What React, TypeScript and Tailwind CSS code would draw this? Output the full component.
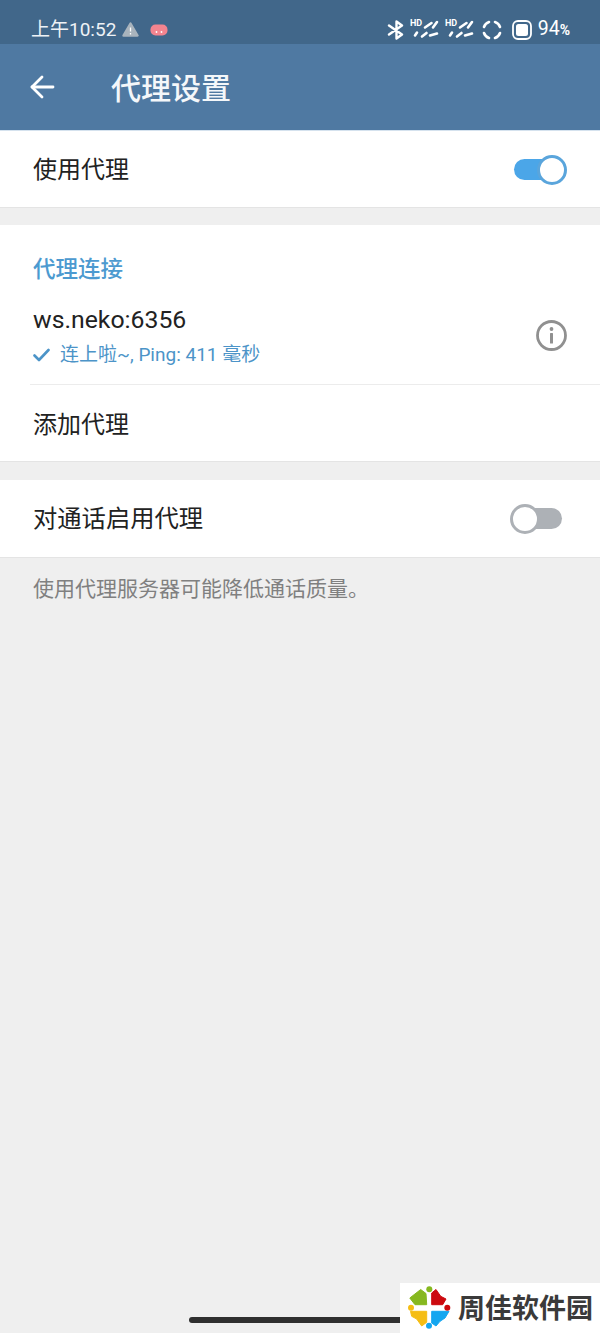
import React from "react";

const font = { fontFamily: '"Roboto","Noto Sans CJK SC",sans-serif' };

function Signal() {
  return (
    <svg width="29" height="22" viewBox="0 0 29 22" fill="none">
      <text x="0" y="7" fontSize="9" fontWeight="700" fill="#fff" fontFamily="Roboto, sans-serif">HD</text>
      <g stroke="#fff" strokeWidth="2.6" strokeLinecap="round">
        <path d="M5 16.5 L7 13.5" />
        <path d="M12 17.5 L16.5 14" />
        <path d="M15 8.5 L21.5 4" />
        <path d="M20 16.5 L27 14.5" />
        <path d="M23 8.5 L27 3" />
      </g>
    </svg>
  );
}

function StatusBar() {
  return (
    <div className="h-[44px] bg-[#41678a] flex items-center justify-between pl-[31px] pr-[30px] pt-[15px] text-white">
      <div className="flex items-center">
        <span className="text-[19px] leading-[24px] text-[#eef2f6]">上午10:52</span>
        <svg className="ml-[6px]" width="17" height="15" viewBox="0 0 17 15">
          <path d="M8.5 1.5 L15.5 13.5 H1.5 Z" fill="#a9b4bd" stroke="#a9b4bd" strokeWidth="2.4" strokeLinejoin="round" />
          <path d="M8.5 5.5 V9.5 M8.5 11 V12.5" stroke="#fff" strokeWidth="1.3" />
        </svg>
        <svg className="ml-[11px]" width="18" height="14" viewBox="0 0 18 14">
          <rect x="0.5" y="1.5" width="17" height="11" rx="5" fill="#f3848f" />
          <circle cx="6.5" cy="9" r="0.9" fill="#fff" />
          <circle cx="11.5" cy="9" r="0.9" fill="#fff" />
        </svg>
      </div>
      <div className="flex items-center">
        <svg width="18" height="20" viewBox="0 0 18 20" fill="none" stroke="#fff" strokeWidth="2.4" strokeLinecap="round" strokeLinejoin="round">
          <path d="M2 5.5 L15 14.5 L9.5 18.5 V1.5 L15 5.5 L2 14.5" />
        </svg>
        <div className="ml-[5px]"><Signal /></div>
        <div className="ml-[6px]"><Signal /></div>
        <svg className="ml-[8px]" width="20" height="20" viewBox="0 0 20 20" fill="none" stroke="#fff" strokeWidth="2.6" strokeLinecap="round">
          <path d="M2 7 A8 8 0 0 1 7 2" />
          <path d="M13 2 A8 8 0 0 1 18 7" />
          <path d="M18 13 A8 8 0 0 1 13 18" />
          <path d="M7 18 A8 8 0 0 1 2 13" />
        </svg>
        <svg className="ml-[10px]" width="20" height="20" viewBox="0 0 20 20" fill="none">
          <rect x="1" y="1" width="18" height="18" rx="5" stroke="#fff" strokeWidth="1.8" />
          <rect x="4" y="4" width="12" height="12" rx="2.5" fill="#fff" />
        </svg>
        <span className="ml-[6px] text-[19.5px] leading-[24px] whitespace-nowrap">94<span className="text-[14px] font-bold">%</span></span>
      </div>
    </div>
  );
}

function Switch({ on }: { on: boolean }) {
  return (
    <div className="relative w-[53px] h-[30px] flex items-center">
      <div className={on ? "w-[50px] h-[21px] rounded-full bg-[#4ba6e8]" : "w-[50px] h-[21px] ml-[2px] rounded-full bg-[#adb1b6]"} />
      <div className={on ? "absolute right-0 top-0 w-[30px] h-[30px] rounded-full bg-white border-[3px] border-[#5aa5dc]" : "absolute left-0 top-0 w-[30px] h-[30px] rounded-full bg-white border-[3px] border-[#adb1b6]"} />
    </div>
  );
}

export default function App() {
  return (
    <div className="relative w-[600px] h-[1333px] overflow-hidden bg-[#efefef]" style={font}>
      <StatusBar />
      <header className="h-[86px] bg-[#4f79a2] flex items-center pl-[30px] text-white">
        <svg width="25" height="26" viewBox="0 0 25 26" fill="none" stroke="#fff" strokeWidth="2.8" strokeLinecap="round" strokeLinejoin="round">
          <path d="M2 13 H23" />
          <path d="M12 3 L2 13 L12 23" />
        </svg>
        <h1 className="ml-[56px] mt-[3px] text-[30px] leading-[36px] font-medium text-[#f4f7fa]">代理设置</h1>
      </header>

      <section className="h-[78px] pt-[1px] bg-white border-t border-[#d5e2ee] border-b-[#e4e4e4] border-b flex items-center justify-between pl-[33px] pr-[33px]">
        <span className="text-[24px] leading-[32px] text-[#222222]">使用代理</span>
        <Switch on />
      </section>

      <section className="mt-[17px] h-[237px] bg-white border-b border-[#e4e4e4]">
        <div className="pt-[30px] pl-[33px] text-[22.5px] leading-[28px] font-medium text-[#4c9ad0]">代理连接</div>
        <div className="mt-[12px] h-[90px] ml-[30px] pl-[3px] pr-[33px] border-b border-[#ececec] flex items-center justify-between">
          <div className="mt-[-6px]">
            <div className="text-[24.8px] leading-[32px] text-[#222222] mt-[-1px]">ws.neko:6356</div>
            <div className="mt-[6px] flex items-center text-[19px] leading-[26px] text-[#4c94c8]">
              <svg width="17" height="14" viewBox="0 0 17 14" fill="none" stroke="#4c94c8" strokeWidth="2.6" strokeLinecap="round" strokeLinejoin="round">
                <path d="M1.5 7.5 L6 12 L15.5 2" />
              </svg>
              <span className="ml-[10px]">连上啦~, Ping: 411 毫秒</span>
            </div>
          </div>
          <svg width="31" height="31" viewBox="0 0 31 31" fill="none" className="shrink-0 mt-[-8px]">
            <circle cx="15.5" cy="15.5" r="14" stroke="#909090" strokeWidth="2.8" />
            <circle cx="15.5" cy="9" r="1.9" fill="#909090" />
            <rect x="14" y="13" width="3" height="10.5" rx="0.5" fill="#909090" />
          </svg>
        </div>
        <div className="h-[76px] pt-[3px] flex items-center pl-[33px] text-[24px] leading-[32px] text-[#222222]">添加代理</div>
      </section>

      <section className="mt-[18px] h-[78px] bg-white border-b border-[#e4e4e4] flex items-center justify-between pl-[33px] pr-[37px]">
        <span className="text-[24.3px] leading-[32px] text-[#222222]">对通话启用代理</span>
        <Switch on={false} />
      </section>

      <p className="pt-[17px] pl-[33px] text-[21px] leading-[28px] text-[#808080]">使用代理服务器可能降低通话质量。</p>

      <div className="absolute left-[189px] top-[1317px] w-[230px] h-[6px] rounded-full bg-[#2f2f2f]" />

      <div className="absolute left-[400px] top-[1283px] w-[200px] h-[50px] bg-white flex items-center pl-[7px]">
        <svg width="46" height="46" viewBox="0 0 46 46" strokeLinejoin="round" strokeWidth="1">
          <path d="M2.8 13 L13.7 4.5 L19 8.5 L19.7 19.7 L8 19.7 Z" fill="#86b81f" stroke="#86b81f" />
          <path d="M24.7 19.7 L24.7 8 L29 4.5 L33.7 11.3 L39 14 L35.7 19.7 Z" fill="#cc0a0f" stroke="#cc0a0f" />
          <path d="M3.5 26.3 L19.7 26.3 L19.7 37.3 L14.7 41 L9.7 34 L4.7 31.3 Z" fill="#f5bd14" stroke="#f5bd14" />
          <path d="M24.7 26.3 L42 26.3 L38 33 L33 36.3 L29 41 L24.7 38 Z" fill="#14a6f0" stroke="#14a6f0" />
          <circle cx="22.3" cy="4.3" r="3" fill="#86b81f" />
          <circle cx="40.3" cy="22.7" r="3" fill="#cc0a0f" />
          <circle cx="22" cy="40.7" r="3" fill="#14a6f0" />
          <circle cx="4" cy="22.7" r="3" fill="#f5bd14" />
        </svg>
        <span className="ml-[5px] mt-[-2px] text-[27px] leading-[34px] font-bold text-[#3a3a3a] whitespace-nowrap" style={{ fontFamily: '"Noto Sans CJK SC",sans-serif' }}>周佳软件园</span>
      </div>
    </div>
  );
}
